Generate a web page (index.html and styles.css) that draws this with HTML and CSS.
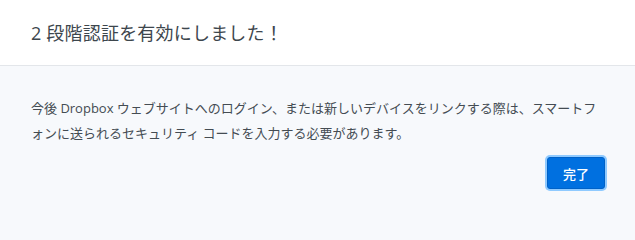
FILE: index.html
```html
<!DOCTYPE html>
<html lang="ja">
<head>
<meta charset="utf-8">
<link rel="stylesheet" href="styles.css">
</head>
<body>
<div class="modal">
  <header class="modal-header">
    <h1 class="title">2 段階認証を有効にしました！</h1>
  </header>
  <section class="modal-body">
    <p class="message">今後 Dropbox ウェブサイトへのログイン、または新しいデバイスをリンクする際は、スマートフォンに送られるセキュリティ コードを入力する必要があります。</p>
    <div class="actions">
      <button class="btn-primary">完了</button>
    </div>
  </section>
</div>
</body>
</html>
```
FILE: styles.css
```css
html, body {
  margin: 0;
  padding: 0;
  width: 635px;
  height: 218px;
  overflow: hidden;
}
body {
  font-family: "Open Sans", "Noto Sans CJK JP", sans-serif;
  background: #f7f9fc;
}
.modal {
  display: flex;
  flex-direction: column;
  height: 218px;
}
.modal-header {
  background: #ffffff;
  height: 63px;
  border-bottom: 1px solid #e3e6ea;
  display: flex;
  align-items: center;
  padding: 0 31px 2px;
  box-sizing: content-box;
}
.title {
  margin: 0;
  font-size: 18px;
  font-weight: 400;
  color: #3d464d;
  letter-spacing: 0.2px;
}
.modal-body {
  flex: 1;
  background: #f7f9fc;
  padding: 30px 30px 0 31px;
}
.message {
  margin: 0;
  font-size: 13px;
  line-height: 25px;
  color: #444c53;
}
.actions {
  display: flex;
  justify-content: flex-end;
  margin-top: 11px;
}
.btn-primary {
  font-family: "Noto Sans CJK JP", sans-serif;
  font-size: 13px;
  font-weight: 500;
  color: #ffffff;
  background: #0070e0;
  border: 1px solid #0062c8;
  border-radius: 3px;
  width: 58px;
  height: 32px;
  padding: 0;
  box-shadow: 0 0 0 2px #8fcaff;
}
```
